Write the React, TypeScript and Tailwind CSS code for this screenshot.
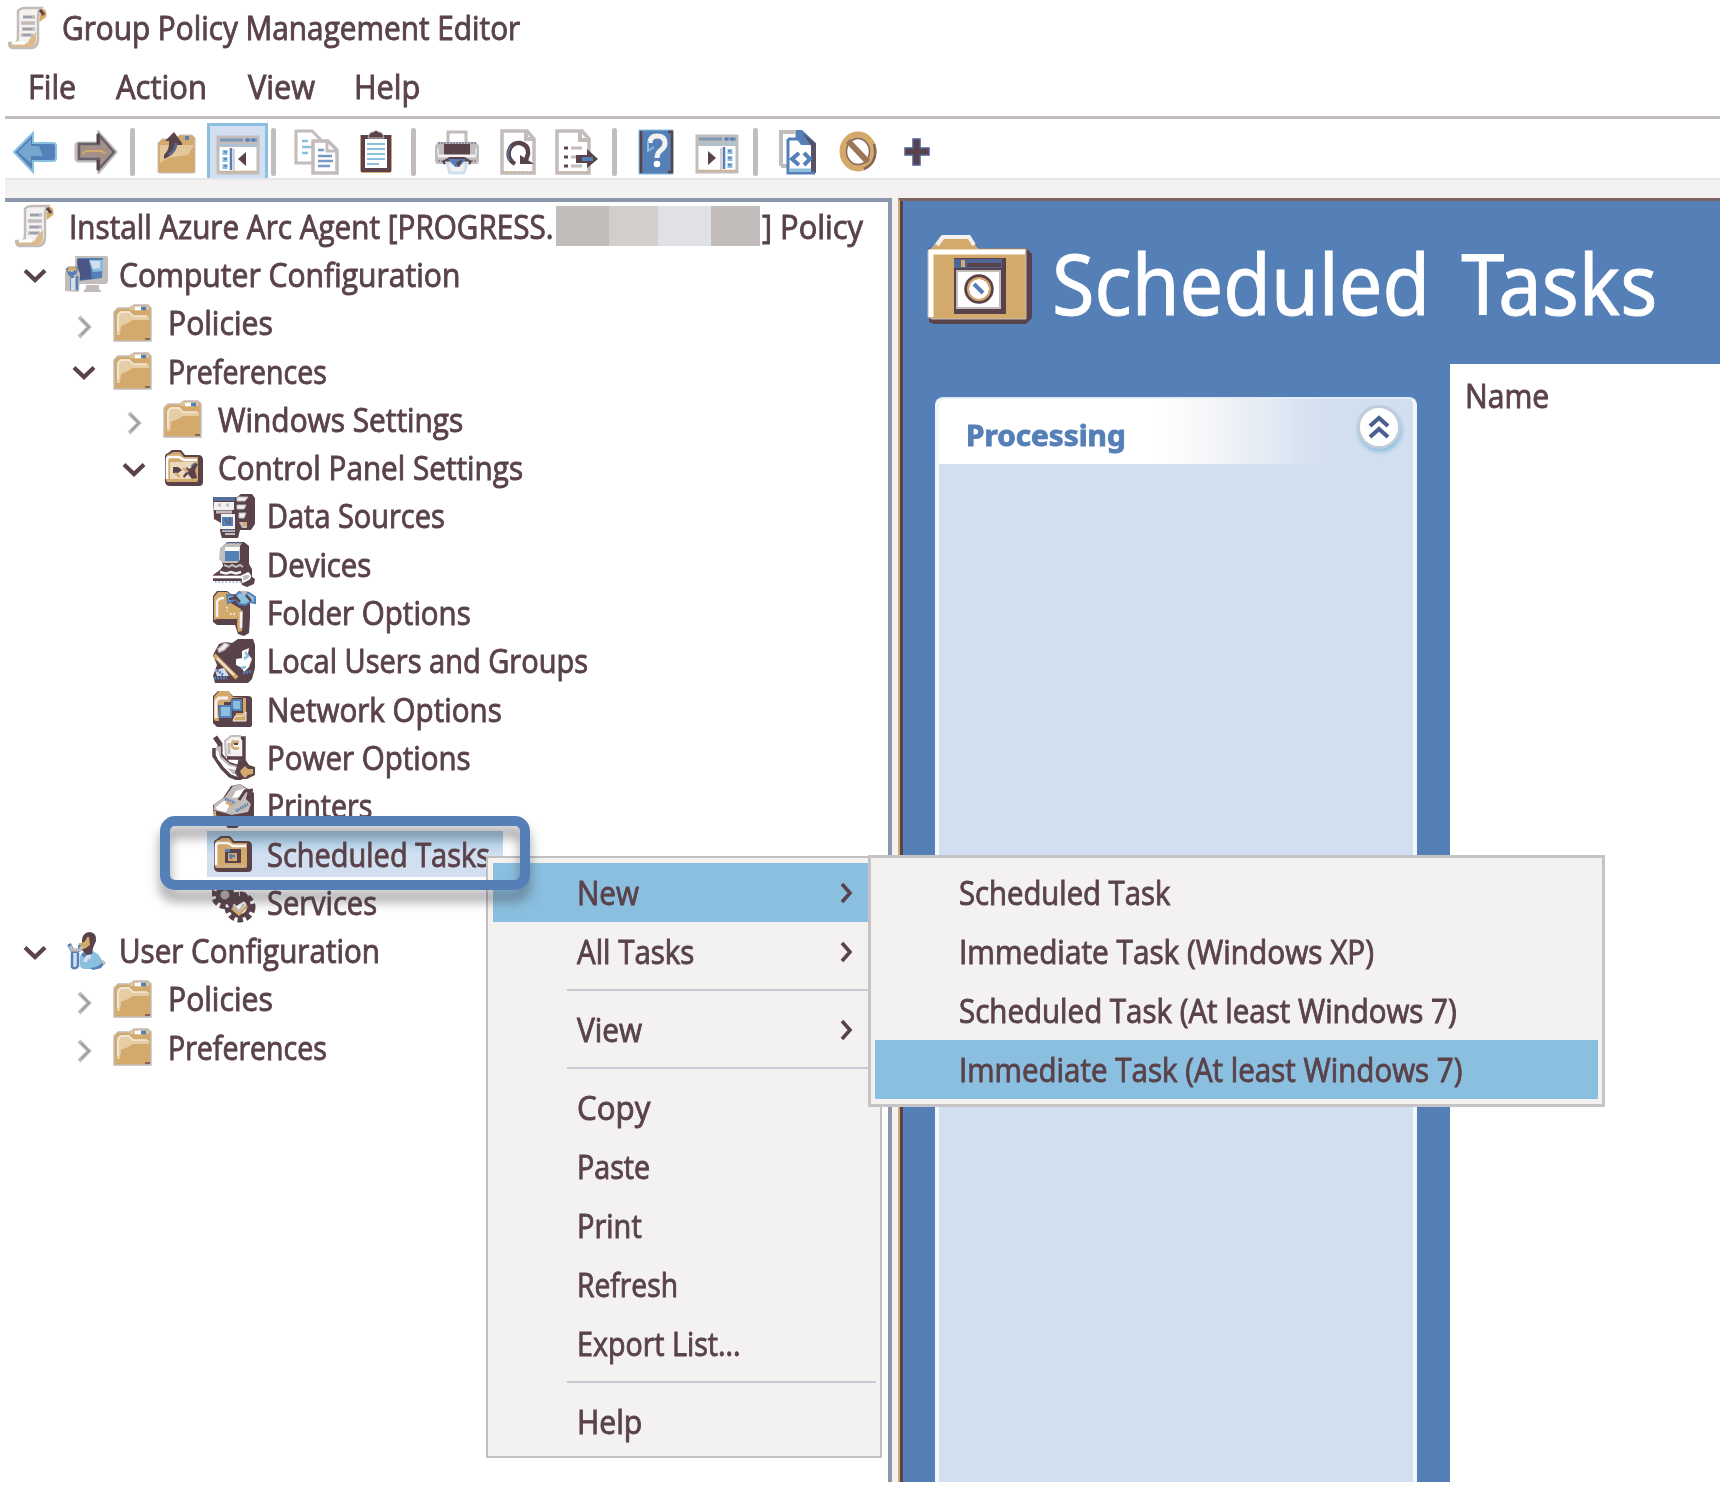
import { useLayoutEffect, useRef, useState, type ReactNode } from "react";

const INK = "#5a424a";
const BLUE = "#557fb7";
const SKY = "#8abfdf";
const PALE = "#d2dff0";
const TAN = "#d4aa6c";
const GRAY = "#c2bcba";
const OFF = "#f3f2f0";

/** Text condensed or widened horizontally so that it fills the given width. */
function Fit({ w, children, className = "" }: { w: number; children: string; className?: string }) {
  const ref = useRef<HTMLSpanElement>(null);
  const [scale, setScale] = useState(1);
  useLayoutEffect(() => {
    if (ref.current) setScale(w / ref.current.offsetWidth);
  }, [w]);
  return (
    <span className={`block shrink-0 ${className}`} style={{ width: w }}>
      <span
        ref={ref}
        className="inline-block origin-left whitespace-pre"
        style={{ transform: `scaleX(${scale})` }}
      >
        {children}
      </span>
    </span>
  );
}

function Svg({ w, h, children, className = "" }: { w: number; h: number; children: ReactNode; className?: string }) {
  return (
    <svg width={w} height={h} viewBox={`0 0 ${w} ${h}`} className={`shrink-0 ${className}`} fill="none">
      {children}
    </svg>
  );
}

/* ---------- icons ---------- */

function Scroll() {
  return (
    <Svg w={42} h={44}>
      <path d="M10 5Q12 2 17 2h16q-3 3-3 8v23q0 8-6 9H4q-3-1-3-5h6q3-1 3-6z" fill={OFF} stroke={GRAY} strokeWidth="2.5" />
      <path d="M28 26v8q-1 7-6 7H5q-3 0-3-3h14q4 0 5-4 3-5 7-8z" fill={TAN} opacity=".75" />
      <path d="M4 37h13" stroke="#fff" strokeWidth="3" />
      <path d="M6 42h18q5-2 6-8V10" stroke={GRAY} strokeWidth="2" />
      <path d="M33 4q5 0 4 6l-4 3V8" stroke={TAN} strokeWidth="3" />
      <path d="M32 4l4 5" stroke={INK} strokeWidth="3" />
      <path d="M15 11h12M13 17h14M14 23h13M13 29h12" stroke={GRAY} strokeWidth="3.4" />
      <path d="M15 11h9M15 23h9M15 29h8" stroke="#8d97ad" strokeWidth="1.4" />
    </Svg>
  );
}

function Folder() {
  return (
    <Svg w={40} h={38}>
      <path d="M1 37V8l4-4h12l4-3h14l3 3v33z" fill={TAN} stroke={GRAY} strokeWidth="1.4" />
      <path d="M4 31V10l3-3h9l5 5h15v4H20l-5 3-7 3-1 9z" fill="#ead3ae" opacity=".85" />
      <path d="M5 28V13q1-5 5-5h6l4 4h14" stroke={OFF} strokeWidth="1.6" opacity=".8" />
      <path d="M17 4h19" stroke="#dcc39a" strokeWidth="4" />
      <path d="M22 4.500h8" stroke="#fff" strokeWidth="3.600" />
      <path d="M28 4.500h5" stroke={BLUE} strokeWidth="3.600" />
      <path d="M32 35h5" stroke={INK} strokeWidth="1.300" />
    </Svg>
  );
}

function FolderDark({ kind }: { kind: "tools" | "clock" }) {
  return (
    <Svg w={42} h={38}>
      <path d="M2 32V7q0-2 3-3l4-3h9l4 5h13q5 0 5 5v22q0 4-4 4H7q-5 0-5-5z" fill={INK} />
      <path d="M3 31V8q1-3 4-3l3-2h7l4 5h14v23q0 2-2 2H5q-2 0-2-2z" fill={TAN} />
      <path d="M4 30V11q0-3 3-3h9l5 3h13" stroke="#fff" strokeWidth="2.600" />
      {kind === "tools" ? (
        <>
          <path d="M7 13h24v17H7z" fill="#ead9bd" />
          <path d="M10 18h5l4 3-4 3h-5zM20 27l4-5-1-4 4 2 4-6 4 1-3 6 2 8-5 1-4-5-4 4z" fill={INK} />
          <path d="M12 24l5 4M20 19l5 4" stroke={TAN} strokeWidth="2.500" />
          <path d="M28 17l4-3" stroke={BLUE} strokeWidth="1.500" />
        </>
      ) : (
        <>
          <path d="M13 14h16v14H13z" fill={INK} />
          <path d="M13 14h5v3h-5z" fill={BLUE} />
          <path d="M16 18h9v8h-9z" fill={TAN} />
          <path d="M17 21h6M19 19v5" stroke={BLUE} strokeWidth="2.600" />
          <path d="M5 31h28" stroke={GRAY} strokeWidth="1.500" strokeDasharray="2 1.500" />
        </>
      )}
    </Svg>
  );
}

function Computer() {
  return (
    <Svg w={44} h={40}>
      <path d="M11 2h31q2 0 2 2v24l-2 2H14l-3-4z" fill={GRAY} />
      <path d="M14 4h25l-1 20-23 3z" fill={BLUE} />
      <path d="M13 5h12l3 20-14 1z" fill="#4a5785" />
      <path d="M25 6h14v11l-10 1z" fill={SKY} />
      <path d="M26 7h10v7l-7 1z" fill={PALE} />
      <path d="M22 31h13v4l3 3H19l3-4z" fill={GRAY} />
      <path d="M1 37V18l3-6h9l3 8-1 18z" fill={GRAY} />
      <path d="M3 14l3 6 5-1 2-6M8 20v16" stroke={BLUE} strokeWidth="3.500" />
      <path d="M4 17q4-5 9-1" stroke={TAN} strokeWidth="3" />
      <path d="M9 24v12" stroke={PALE} strokeWidth="4" />
      <path d="M13 22v14" stroke={BLUE} strokeWidth="2.500" />
    </Svg>
  );
}

function User() {
  return (
    <Svg w={44} h={40}>
      <path d="M16 34q-2-15 9-15 9 1 14 12 0 7-6 7H21q-5 0-5-4z" fill={SKY} />
      <path d="M26 37q9 0 13-7l2 2-4 5-8 2zM17 24q3-4 7-3l-3 6z" fill={BLUE} />
      <path d="M21 31q1-6 6-5" stroke={PALE} strokeWidth="4" />
      <path d="M38 30l3 3" stroke={GRAY} strokeWidth="3" />
      <path d="M18 9q1-8 8-8 7 1 6 9l-3 7-1 6-5 1-5-5z" fill={INK} />
      <path d="M15 12q7 0 8-6h2l1 8-4 3-5 2-3-3z" fill={TAN} />
      <path d="M5 13l3 6 4 2 4-3v-4M9 21v14" stroke={BLUE} strokeWidth="4" />
      <path d="M6 15l2 4h8l2-4" stroke={GRAY} strokeWidth="3" />
      <path d="M8 22v14q3 3 6-1V22" fill={PALE} stroke={BLUE} strokeWidth="2.500" />
    </Svg>
  );
}

function DataSources() {
  return (
    <Svg w={44} h={46}>
      <path d="M1 4h24l4-3h11l3 4v26l-4 6H28l-2 8H10l-2-7 1-8-7-4z" fill={INK} />
      <path d="M2 4h21v4H2z" fill={BLUE} opacity=".75" />
      <path d="M2 9h20v8H2z" fill={OFF} />
      <path d="M6 12h3M14 12h3M4 19h16" stroke={GRAY} strokeWidth="3" />
      <path d="M25 4h11l-3 4h-8zM25 12h9l-2 4h-7zM27 20h7l-2 5h-5z" fill={OFF} stroke={GRAY} />
      <path d="M27 29h8v6h-5z" fill={GRAY} />
      <path d="M31 29h4v4h-4z" fill={TAN} />
      <path d="M9 21h14v15H7l2-5z" fill={OFF} />
      <path d="M10 24h11v9H10z" fill={BLUE} />
      <path d="M13 26l3 5M18 25v6" stroke={INK} />
      <path d="M10 38h13M13 41h10" stroke={GRAY} strokeWidth="2" />
      <path d="M10 37h12" stroke={BLUE} />
    </Svg>
  );
}

function Devices() {
  return (
    <Svg w={44} h={46}>
      <path d="M8 8l7-7h17l5 4v18l3 5v8l3 2-1 5-7 3-5-2-1-4H1v-6l7-5 3-4z" fill={INK} />
      <path d="M8 8l6-6h16l-2 3v14l-3 3H11l-4-4z" fill={GRAY} />
      <path d="M13 6h15l-1 4H13z" fill="#fff" />
      <path d="M13 10h14v10H13z" fill={BLUE} />
      <path d="M15 2h14" stroke={BLUE} strokeWidth="1.500" strokeDasharray="2 2" />
      <path d="M12 24l5 2 3-2 4 2 4-2 3 2" stroke={GRAY} strokeWidth="2" />
      <path d="M8 31l6 1.500 5-1.500 5 1.500 5-1.500" stroke={OFF} strokeWidth="2.400" />
      <path d="M1 36h29" stroke="#fff" strokeWidth="2.600" />
      <path d="M30 35l6-3q4 3 1 6l-6 3z" fill={GRAY} stroke="#fff" strokeWidth="1.600" />
      <path d="M3 41h26" stroke={BLUE} strokeDasharray="1.500 2" />
    </Svg>
  );
}

function FolderOptions() {
  return (
    <Svg w={44} h={46}>
      <path d="M1 32V6l4-5h10l4 3 19 2v22l-1 15-5 3-6-2-3-9H5z" fill={INK} />
      <path d="M2 30V7l4-5h9l4 3v8l10 6-4 10H5z" fill={TAN} />
      <path d="M5 27V12q1-4 7-4" stroke={OFF} strokeWidth="2.500" />
      <path d="M15 17v4M18 24h5" stroke={OFF} strokeWidth="2" strokeDasharray="1.500 2" />
      <path d="M26 19l5 2-1 20-4 1-1-7z" fill={TAN} />
      <path d="M29 22v16" stroke={OFF} strokeWidth="2.600" />
      <path d="M15 5l8 1 4-4 10 1 6 4v6l-5-1-5 3-6-1-3-5-8 4z" fill={SKY} stroke={BLUE} strokeWidth="2" />
      <path d="M28 1h9l-5 4z" fill={GRAY} />
      <path d="M22 5l6 7M34 5l5 6M17 9l7-1" stroke={INK} strokeWidth="2.500" />
    </Svg>
  );
}

function LocalUsers() {
  return (
    <Svg w={44} h={46}>
      <path d="M1 17L7 6l6-2 7 1 6-4h15l2 6v23l-3 11-4 4H3l-2-7 4-11z" fill={INK} />
      <path d="M6 11l7-6 4 2-5 5-5 2z" fill={OFF} stroke={GRAY} strokeWidth="1.500" />
      <path d="M30 13l7-3-1 6 4 5-3 8-5 5-2-4-6-3v-6l6-1z" fill="#fff" />
      <path d="M33 14l3 4-4 3M29 30l5-1" stroke={SKY} strokeWidth="2.500" />
      <path d="M2 17l23 23" stroke={TAN} strokeWidth="4" />
      <path d="M5 20l17 17" stroke={OFF} strokeWidth="1.400" />
      <path d="M3 32l9-2 5 8H5z" fill={PALE} />
      <path d="M5 32l6 5M2 40h13M31 35l9-2" stroke={BLUE} strokeWidth="3" strokeDasharray="2 1" />
    </Svg>
  );
}

function NetworkOptions() {
  return (
    <Svg w={44} h={40}>
      <path d="M1 34V7l5-5h10l5 5h15q4 0 4 3v26q0 2-3 2H5z" fill={INK} />
      <path d="M2 31V8l5-6h9l5 6 13 1v20l-3 3H4z" fill={TAN} />
      <path d="M4 29V12l3-3h9" stroke={OFF} strokeWidth="3" />
      <path d="M6 16h6v-3h6l2-4h11v15h-7l-1 8H7z" fill={INK} />
      <path d="M8 17h11v11H8z" fill={SKY} stroke={BLUE} strokeWidth="2" />
      <path d="M20 11h9v10h-7l-2-2z" fill={SKY} stroke={BLUE} strokeWidth="2" />
      <path d="M23 27h8l3-4v9H21z" fill={TAN} stroke={OFF} />
      <path d="M4 33h30v4H4z" fill={INK} />
    </Svg>
  );
}

function PowerOptions() {
  return (
    <Svg w={44} h={46}>
      <path d="M3 3l5 7v11l8 9 9 3" stroke={INK} strokeWidth="5" />
      <path d="M2 14v8l8 12 8 8 8 3 8-3" stroke={INK} strokeWidth="3.500" />
      <path d="M4 13l1 9 8 10 8 8h5l3-7-11-3-9-8V12z" fill={GRAY} />
      <path d="M5 17l2 8 9 8 10 2" stroke="#fff" strokeWidth="2.500" />
      <path d="M13 7l6-5h9l4 4v17l-8 2-10-3z" fill={OFF} stroke={GRAY} strokeWidth="2" />
      <path d="M17 9v11M21 6v4" stroke={GRAY} strokeWidth="3" />
      <path d="M29 4h3v20H15" stroke={INK} strokeWidth="3.500" />
      <path d="M27 8q-8-1-7 4 1 4 7 2" stroke={TAN} strokeWidth="2.500" />
      <path d="M22 10h4" stroke={INK} strokeWidth="2" />
      <path d="M27 24l6 1 4 6 6 2v8l-8 4h-8l-4-6z" fill={INK} />
      <path d="M28 37l5-5 3 3h5v5l-5 1-3 3-3-3z" fill={TAN} />
    </Svg>
  );
}

function Printers() {
  return (
    <Svg w={44} h={46}>
      <path d="M1 22l10-7 8-12 9-2 8 5 6 4v26l-6 4-7 1-4 4h-9l-4-4-10-4z" fill={INK} />
      <path d="M2 21l11-7 8-11 7-2 8 6-2 9 5 5-3 8-16 3-18-5z" fill={GRAY} />
      <path d="M4 24l9-7 5 4-4 8-9-2zM24 8l9-3-4 9-9 1z" fill="#fff" />
      <path d="M13 16l10 4M24 28l12-7" stroke={BLUE} strokeWidth="3" strokeDasharray="1.500 1" />
      <path d="M14 19l7 4" stroke={TAN} strokeWidth="3" />
      <path d="M27 17l6-9 8-1M21 33h16" stroke={INK} strokeWidth="3" />
      <path d="M3 28v5l9 4" stroke={TAN} strokeWidth="2" />
    </Svg>
  );
}

function Services() {
  return (
    <Svg w={44} h={42}>
      <circle cx="13" cy="14" r="10" stroke={INK} strokeWidth="8" strokeDasharray="5 2.500" />
      <circle cx="13" cy="14" r="7" fill={GRAY} stroke={INK} strokeWidth="5" />
      <circle cx="28" cy="26" r="12" stroke={INK} strokeWidth="7" strokeDasharray="5 3" />
      <circle cx="28" cy="26" r="9" fill="#fff" stroke={INK} strokeWidth="4" />
      <path d="M20 15l5 6 5-3 6-3" stroke={INK} strokeWidth="6" />
      <path d="M20 27l7 6 8-8" stroke={TAN} strokeWidth="3" />
      <path d="M21 24l6 6 5-7" stroke={GRAY} strokeWidth="2" />
    </Svg>
  );
}

function Down() {
  return (
    <Svg w={24} h={16}>
      <path d="M2 2.500l10 9.500 10-9.500" stroke={INK} strokeWidth="4.200" />
    </Svg>
  );
}

function Right({ muted = false }: { muted?: boolean }) {
  return muted ? (
    <Svg w={16} h={24}>
      <path d="M2 2l10 10L2 22" stroke={GRAY} strokeWidth="4" />
      <path d="M4 4l8 8-8 8" stroke="#8b93a6" strokeWidth="1.300" />
    </Svg>
  ) : (
    <Svg w={14} h={22}>
      <path d="M2 2l8 9-8 9" stroke={INK} strokeWidth="3.600" />
    </Svg>
  );
}

/* ---------- toolbar drawings ---------- */

const Back = () => (
  <Svg w={44} h={44}>
    <path d="M1 22L20 3v10h20q3 0 3 3v12q0 3-3 3H20v11z" fill={BLUE} stroke={SKY} strokeWidth="2" />
    <path d="M5 22L18 9v7h8l4 10H18v7z" fill={SKY} opacity=".6" />
  </Svg>
);
const Forward = () => (
  <Svg w={44} h={44}>
    <path d="M42 22L25 3v10H5q-3 0-3 3v12q0 3 3 3h20v11z" fill="#a98f80" stroke={GRAY} strokeWidth="3" />
    <path d="M40 22L25 5v9H5v15h20v10z" fill="#a39088" stroke="#66606f" strokeWidth="2.500" />
    <path d="M24 4v10M24 30v10" stroke={INK} strokeWidth="3" />
    <path d="M8 24l4-3h16l3 3" stroke={TAN} strokeWidth="2" />
  </Svg>
);
const UpFolder = () => (
  <Svg w={40} h={44}>
    <path d="M1 42V13l4-4h13l5-4h12l3 3v34q0 1-2 1H3q-2 0-2-1z" fill={TAN} stroke={GRAY} />
    <path d="M3 15h34l-6 10-20 3-8 5z" fill="#ead3ae" opacity=".7" />
    <path d="M28 8h4" stroke={BLUE} strokeWidth="4" />
    <path d="M7 29q10-4 12-14h6v-2L17 2l-9 9h4q1 8-5 14z" fill={INK} />
    <path d="M12 25q7-5 7-12" stroke="#59678f" strokeWidth="3" />
  </Svg>
);
const Console = ({ flip = false }: { flip?: boolean }) => (
  <Svg w={44} h={40}>
    <path d="M2 2h40v36H2z" fill="#fff" stroke={GRAY} strokeWidth="3" />
    <path d="M2 2h40v10H2z" fill={GRAY} />
    <path d="M4 5h23M29 5h12" stroke="#7d97bb" strokeWidth="3" />
    <path d="M30 5h3M36 5h3" stroke={BLUE} strokeWidth="3" />
    <path d="M3 10h38" stroke="#a8c3d6" strokeWidth="2" />
    <g transform={flip ? "matrix(-1 0 0 1 44 0)" : undefined}>
      <path d="M15 13v22" stroke={BLUE} strokeWidth="2.600" />
      <path d="M18 14v22" stroke={GRAY} strokeWidth="1.400" />
      <path d="M9 15v5M9 22v5M9 29v5" stroke={SKY} strokeWidth="5" />
      <path d="M8 17h3M8 24h3M8 31h3" stroke={BLUE} strokeWidth="1.600" />
    </g>
    <path d={flip ? "M21 24l-8-7v14z" : "M22 24l8-7v14z"} fill={INK} />
    <path d="M3 36.500h38" stroke="#cbb391" strokeWidth="1.500" />
  </Svg>
);
const Copy = () => (
  <Svg w={46} h={46}>
    <path d="M2 2h16l8 8v24H2z" fill="#fff" stroke={GRAY} strokeWidth="3" />
    <path d="M8 12h6M8 18h10M8 24h6" stroke={SKY} strokeWidth="2.500" />
    <path d="M19 12h15l9 9v23H19z" fill="#fff" stroke={GRAY} strokeWidth="3.500" />
    <path d="M33 13v9h10" stroke={GRAY} strokeWidth="3" />
    <path d="M24 21h6M24 27h14M24 32h15M24 37h12" stroke={BLUE} strokeWidth="2.400" opacity=".8" />
  </Svg>
);
const Clipboard = () => (
  <Svg w={34} h={44}>
    <path d="M1 5h32v36l-2 2H3l-2-2z" fill={TAN} />
    <path d="M4 7h26v33H4z" stroke={INK} strokeWidth="4" fill="#fff" />
    <path d="M9 8q1-6 5-6 3-3 6 0 4 0 5 6z" fill={INK} stroke={GRAY} />
    <path d="M8 14h18M8 19h18M8 24h18M8 29h18M8 34h12" stroke={SKY} strokeWidth="1.800" />
  </Svg>
);
const Printer = () => (
  <Svg w={46} h={46}>
    <path d="M14 14V3h18v11" fill="#fff" stroke={GRAY} strokeWidth="3" />
    <path d="M4 13h38l3 4v15q0 3-3 3H4q-3 0-3-3V17z" fill={GRAY} />
    <path d="M4 14h38M4 32h38" stroke="#8d90a1" strokeWidth="2" strokeDasharray="2 1" />
    <path d="M10 15h26v11H10z" fill={INK} />
    <path d="M4 27h38" stroke={OFF} strokeWidth="3" />
    <path d="M4 19v7M42 19v7" stroke={PALE} strokeWidth="2" />
    <path d="M9 34l7-4h14l7 4" stroke={INK} strokeWidth="4" />
    <path d="M13 34h20l-3 10H16z" fill={OFF} stroke={PALE} strokeWidth="3" />
    <path d="M14 30h18l-7 8h-4z" fill={BLUE} />
    <path d="M22 34l3 4 4-8z" fill={INK} />
  </Svg>
);
const Refresh = () => (
  <Svg w={36} h={46}>
    <path d="M2 2h25l7 8v34H2z" fill="#fff" stroke={GRAY} strokeWidth="3.500" />
    <path d="M26 2v8h8" stroke={GRAY} strokeWidth="4" />
    <path d="M15 35Q7 30 9 22q3-9 11-8 9 2 8 11l-2 6" stroke={INK} strokeWidth="4.400" />
    <path d="M20 35V26l14 9z" fill={INK} />
    <path d="M10 32q-5-8 1-15" stroke={BLUE} strokeWidth="1.300" />
    <path d="M2 43h32" stroke={TAN} strokeDasharray="2 2" />
  </Svg>
);
const Export = () => (
  <Svg w={44} h={46}>
    <path d="M2 2h25l7 8v34H2z" fill="#fff" stroke={GRAY} strokeWidth="3.500" />
    <path d="M25 2v9h9" stroke={GRAY} strokeWidth="4" />
    <path d="M16 19h11M16 28h6M16 37h11" stroke={GRAY} strokeWidth="3" />
    <path d="M9 19h4M9 28h4M9 37h4" stroke={INK} strokeWidth="3" />
    <path d="M21 26h11v-6l11 10-11 9v-5H21z" fill={INK} />
    <path d="M27 30h11" stroke={BLUE} strokeWidth="4" />
    <path d="M2 43h30" stroke={TAN} strokeDasharray="2 2" />
  </Svg>
);
const Help = () => (
  <Svg w={36} h={46}>
    <path d="M1 1h34v44H1z" fill={BLUE} stroke={SKY} />
    <path d="M3 2v42M30 3h4v40h-4" stroke={INK} strokeWidth="2.500" />
    <path d="M12 14q0-7 7-7 8 0 8 7 0 4-4 7-4 3-4 8" stroke={OFF} strokeWidth="5" />
    <path d="M10 12v10l6-4" stroke={SKY} strokeWidth="2" />
    <circle cx="19" cy="35" r="3.300" fill="#fff" />
  </Svg>
);
const Script = () => (
  <Svg w={40} h={46}>
    <path d="M2 37V3h16v8M2 37h7" stroke={GRAY} strokeWidth="4" />
    <path d="M9 10h12l4 8h9l3 4v22H9z" fill="#fff" />
    <path d="M17 1h6l14 13v30h-5V16H22l-5-7z" fill={BLUE} />
    <path d="M24 4l13 11v29h-5V17z" fill={INK} opacity=".75" />
    <path d="M9 10h10M9 10v34h27" stroke={BLUE} strokeWidth="3" />
    <path d="M20 24l-7 6 7 6M25 24l6 6-6 6" stroke={BLUE} strokeWidth="4" />
    <path d="M10 41h22" stroke={SKY} strokeWidth="3" />
  </Svg>
);
const Ban = () => (
  <Svg w={40} h={44}>
    <ellipse cx="19" cy="21.500" rx="15" ry="16.500" stroke={TAN} strokeWidth="7" />
    <ellipse cx="19" cy="21.500" rx="11.500" ry="13" stroke="#87645a" strokeWidth="1.500" />
    <path d="M9 11l20 21" stroke="#9c7558" strokeWidth="6" />
    <path d="M35 14q5 18-10 25" stroke="#87645a" strokeWidth="2.500" />
  </Svg>
);
const Plus = () => (
  <Svg w={28} h={30}>
    <path d="M10 2h7v9h9v7h-9v10h-7V18H2v-7h8z" fill={INK} stroke="#4e6191" strokeWidth="1.500" />
  </Svg>
);

const Sep = () => <div className="h-12 w-[5px] shrink-0 rounded-sm bg-[#c2bcba]" />;

/* ---------- tree ---------- */

type Row = { indent: string; open?: boolean; closed?: boolean; icon: ReactNode; label: string; w: number; selected?: boolean };

const rows: Row[] = [
  { indent: "pl-[18px]", open: true, icon: <Computer />, label: "Computer Configuration", w: 341 },
  { indent: "pl-[67px]", closed: true, icon: <Folder />, label: "Policies", w: 105 },
  { indent: "pl-[67px]", open: true, icon: <Folder />, label: "Preferences", w: 159 },
  { indent: "pl-[117px]", closed: true, icon: <Folder />, label: "Windows Settings", w: 245 },
  { indent: "pl-[117px]", open: true, icon: <FolderDark kind="tools" />, label: "Control Panel Settings", w: 305 },
  { indent: "pl-[166px]", icon: <DataSources />, label: "Data Sources", w: 178 },
  { indent: "pl-[166px]", icon: <Devices />, label: "Devices", w: 104 },
  { indent: "pl-[166px]", icon: <FolderOptions />, label: "Folder Options", w: 204 },
  { indent: "pl-[166px]", icon: <LocalUsers />, label: "Local Users and Groups", w: 321 },
  { indent: "pl-[166px]", icon: <NetworkOptions />, label: "Network Options", w: 235 },
  { indent: "pl-[166px]", icon: <PowerOptions />, label: "Power Options", w: 204 },
  { indent: "pl-[166px]", icon: <Printers />, label: "Printers", w: 105 },
  { indent: "pl-[162px]", icon: <FolderDark kind="clock" />, label: "Scheduled Tasks", w: 223, selected: true },
  { indent: "pl-[166px]", icon: <Services />, label: "Services", w: 110 },
  { indent: "pl-[18px]", open: true, icon: <User />, label: "User Configuration", w: 261 },
  { indent: "pl-[67px]", closed: true, icon: <Folder />, label: "Policies", w: 105 },
  { indent: "pl-[67px]", closed: true, icon: <Folder />, label: "Preferences", w: 159 },
];

function TreeRow({ row }: { row: Row }) {
  return (
    <div className={`flex h-[48.3px] items-center ${row.indent}`}>
      <div className="flex w-[40px] shrink-0 items-center pt-1">
        {row.open && <Down />}
        {row.closed && <span className="pl-[5px] pt-1"><Right muted /></span>}
      </div>
      <div
        className={`flex h-[46px] items-center ${row.selected ? "w-[296px] bg-[linear-gradient(180deg,#a9cde6_0%,#b5d3ea_25%,#d2dff0_50%)] pl-[4px]" : ""}`}
      >
        <div className="flex w-[56px] shrink-0 items-center pl-[1px]">{row.icon}</div>
        <Fit w={row.w}>{row.label}</Fit>
      </div>
    </div>
  );
}

/* ---------- menus ---------- */

function MenuItem({ label, w, arrow, active }: { label: string; w: number; arrow?: boolean; active?: boolean }) {
  return (
    <div className={`flex h-[59px] items-center pl-[84px] ${active ? "bg-[#8abfdf]" : ""}`}>
      <Fit w={w}>{label}</Fit>
      {arrow && <span className="ml-auto pr-[22px]"><Right /></span>}
    </div>
  );
}

const Divider = () => (
  <div className="flex h-[19px] items-center pl-[74px]">
    <div className="h-[3px] w-full border-t-2 border-[#c5cad6]" />
  </div>
);

export default function App() {
  return (
    <div className="relative h-[1487px] w-[1725px] overflow-hidden bg-white font-['Open_Sans','Noto_Sans',sans-serif] text-[33px] leading-none font-medium text-[#5a424a] [-webkit-text-stroke:0.9px]">
      <div className="flex h-[1482px] flex-col pr-[5px] pl-[5px]">
        <header className="flex h-[55px] shrink-0 items-center pl-[3px]">
          <Scroll />
          <Fit w={458} className="ml-[12px]">Group Policy Management Editor</Fit>
        </header>
        <nav className="flex h-[61px] shrink-0 items-center pt-[1px] pl-[23px]">
          <Fit w={48}>File</Fit>
          <Fit w={91} className="ml-[40px]">Action</Fit>
          <Fit w={67} className="ml-[41px]">View</Fit>
          <Fit w={66} className="ml-[39px]">Help</Fit>
        </nav>
        <div className="h-[3px] shrink-0 bg-[#c2bcba]" />
        <div className="flex h-[59px] shrink-0 items-center pt-[6px] pl-[8px]">
          <Back />
          <span className="ml-[17px]"><Forward /></span>
          <span className="ml-[12px]"><Sep /></span>
          <span className="ml-[22px]"><UpFolder /></span>
          <span className="ml-[10px] flex h-[58px] w-[61px] shrink-0 items-end justify-center border-[3px] border-[#8abfdf] bg-[#d2dff0] pb-[3px]">
            <Console />
          </span>
          <span className="ml-[3px]"><Sep /></span>
          <span className="ml-[18px]"><Copy /></span>
          <span className="ml-[19px]"><Clipboard /></span>
          <span className="ml-[18px]"><Sep /></span>
          <span className="ml-[18px]"><Printer /></span>
          <span className="ml-[20px]"><Refresh /></span>
          <span className="ml-[19px]"><Export /></span>
          <span className="ml-[13px]"><Sep /></span>
          <span className="ml-[21px]"><Help /></span>
          <span className="ml-[21px] pt-1"><Console flip /></span>
          <span className="ml-[14px]"><Sep /></span>
          <span className="ml-[21px]"><Script /></span>
          <span className="ml-[20px]"><Ban /></span>
          <span className="ml-[24px]"><Plus /></span>
        </div>
        <div className="h-[20px] shrink-0 border-t-2 border-[#e3e7ee] bg-[#f3f2f0]" />

        <div className="flex min-h-0 flex-1">
          <aside className="w-[887px] shrink-0 overflow-hidden border-t-4 border-r-4 border-[#8b97ad] bg-white">
            <div className="flex h-[48.3px] items-center pl-[10px]">
              <Scroll />
              <Fit w={485} className="ml-[12px]">Install Azure Arc Agent [PROGRESS.</Fit>
              <div className="ml-[2px] flex h-[40px] w-[204px] shrink-0">
                <div className="w-[53px] bg-[#c2bcba]" />
                <div className="w-[49px] bg-[#d2cecc]" />
                <div className="w-[53px] bg-[#dfe1e5]" />
                <div className="flex-1 bg-[#c2bcba]" />
              </div>
              <Fit w={101} className="ml-[2px]">] Policy</Fit>
            </div>
            {rows.map((row, i) => (
              <TreeRow key={i} row={row} />
            ))}
          </aside>

          <div className="w-[6px] shrink-0 bg-[#f3f2f0]" />

          <main className="flex min-w-0 flex-1 flex-col border-t-[3px] border-l-2 border-t-[#7b6461] border-l-[#d4aa6c] bg-[#557fb7]">
            <div className="flex min-h-0 flex-1 border-l-[3px] border-[#5a424a]">
              <div className="flex min-h-0 w-full flex-col">
                <div className="flex h-[163px] shrink-0 items-start pt-[33px] pl-[24px]">
                  <Svg w={108} h={94}>
                    <path d="M2 88V14l9-2 5-10h27l8 12h48l6 6v64l-6 6H7z" fill={INK} />
                    <path d="M1 83V17L6 13 14 2h27l10 13h48v70H5z" fill={TAN} stroke={GRAY} />
                    <path d="M10 11l6-8h26l5 8" stroke={OFF} strokeWidth="4" />
                    <path d="M4 83V18h94" stroke="#fff" strokeWidth="5" />
                    <path d="M27 24h52v56H27z" fill={INK} />
                    <path d="M27 25h48v9H27z" fill="#4f6697" />
                    <path d="M36 26v7" stroke={TAN} strokeWidth="4" />
                    <path d="M40 31h34" stroke={INK} strokeWidth="4" />
                    <path d="M30 37h43v37H30z" fill="#fff" stroke={GRAY} strokeWidth="2" />
                    <circle cx="52" cy="55" r="12.500" fill="#fff" stroke={INK} strokeWidth="4.500" />
                    <circle cx="52" cy="55" r="11" stroke={TAN} strokeWidth="2" />
                    <path d="M47 50l9 9" stroke={BLUE} strokeWidth="4" />
                  </Svg>
                  <Fit
                    w={605}
                    className="mt-[7px] ml-[17px] font-['Noto_Sans','Open_Sans',sans-serif] text-[84px] font-normal text-white [word-spacing:12px]"
                  >
                    Scheduled Tasks
                  </Fit>
                </div>
                <div className="flex min-h-0 flex-1">
                  <section className="mt-[33px] ml-[32px] flex w-[482px] shrink-0 flex-col overflow-hidden rounded-t-[8px] border-x-[4px] border-t-2 border-x-[#f3f6fb] border-t-[#e4edf7] bg-[#d2dff0]">
                    <div className="flex h-[65px] shrink-0 items-center justify-between bg-[linear-gradient(90deg,#fff_46%,#f6f7f9_56%,#d2dff0_82%)] pr-[12px] pl-[27px]">
                      <Fit w={160} className="pt-[5px] font-['Noto_Sans','Open_Sans',sans-serif] text-[29px] font-bold text-[#557fb7]">Processing</Fit>
                      <div className="mb-[9px] flex size-[44px] items-center justify-center rounded-full border-[3px] border-[#c2cbd8] bg-white shadow-[1px_3px_4px_#8abfdf]">
                        <Svg w={24} h={26}>
                          <path d="M3 12l9-8 9 8M3 23l9-8 9 8" stroke="#4c5f91" strokeWidth="4.200" />
                        </Svg>
                      </div>
                    </div>
                  </section>
                  <div className="ml-[33px] flex-1 bg-white pt-[15px] pl-[15px]">
                    <Fit w={84}>Name</Fit>
                  </div>
                </div>
              </div>
            </div>
          </main>
        </div>
      </div>

      {/* context menu */}
      <div className="absolute top-[856px] left-[486px] w-[396px] border-2 border-[#c2bfc2] bg-[#f3f2f0] py-[5px] pr-[4px] pl-[5px]">
        <MenuItem label="New" w={62} arrow active />
        <MenuItem label="All Tasks" w={117} arrow />
        <Divider />
        <MenuItem label="View" w={65} arrow />
        <Divider />
        <MenuItem label="Copy" w={73} />
        <MenuItem label="Paste" w={73} />
        <MenuItem label="Print" w={65} />
        <MenuItem label="Refresh" w={101} />
        <MenuItem label="Export List..." w={164} />
        <Divider />
        <MenuItem label="Help" w={65} />
      </div>

      {/* submenu */}
      <div className="absolute top-[855px] left-[868px] w-[737px] border-[3px] border-[#c5c3c5] bg-[#f3f2f0] px-1 py-[5px]">
        <MenuItem label="Scheduled Task" w={211} />
        <MenuItem label="Immediate Task (Windows XP)" w={415} />
        <MenuItem label="Scheduled Task (At least Windows 7)" w={498} />
        <MenuItem label="Immediate Task (At least Windows 7)" w={503} active />
      </div>

      {/* callout ring */}
      <div className="absolute top-[816px] left-[160px] h-[74px] w-[370px] rounded-[15px] border-[10px] border-[#557fb7] drop-shadow-[0_11px_6px_rgba(60,60,70,0.5)]" />
    </div>
  );
}
